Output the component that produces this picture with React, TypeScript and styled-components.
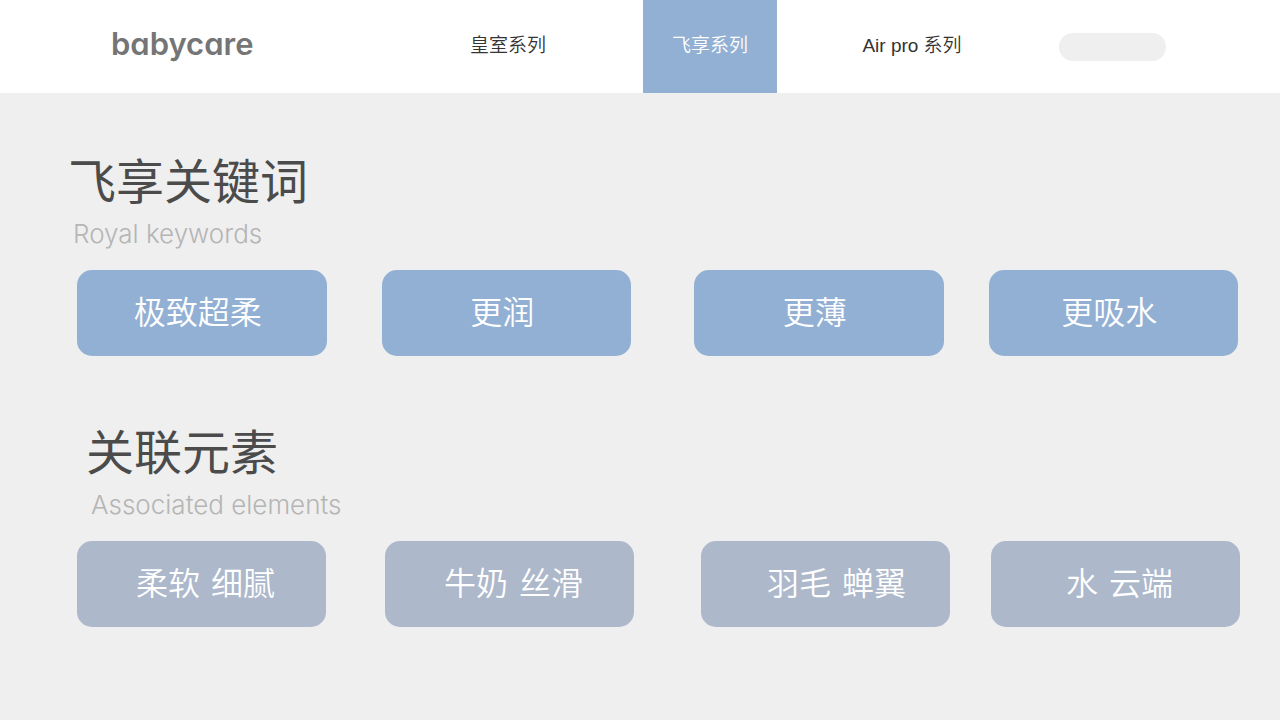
import React from 'react';
import styled, { createGlobalStyle } from 'styled-components';

const GlobalStyle = createGlobalStyle`
  * { box-sizing: border-box; }
  body {
    margin: 0;
    background: #efefef;
    font-family: 'Liberation Sans', 'Noto Sans CJK SC', sans-serif;
  }
`;

const Header = styled.header`
  display: flex;
  align-items: stretch;
  height: 93px;
  padding: 0 114px 0 111px;
  background: #fff;
`;

const Logo = styled.a`
  align-self: center;
  padding-bottom: 6px;
  color: #757575;
  font: 600 31px/36px Inter, sans-serif;
  font-feature-settings: 'cv11';
  text-decoration: none;
`;

const Nav = styled.nav`
  display: flex;
  gap: 68px;
  margin-left: auto;
`;

const NavLink = styled.a<{ $active?: boolean }>`
  display: flex;
  align-items: center;
  justify-content: center;
  width: 134px;
  padding-bottom: 2px;
  background: ${(p) => (p.$active ? '#92b0d3' : 'transparent')};
  color: ${(p) => (p.$active ? '#fff' : '#333')};
  font-size: 19px;
  font-weight: 350;
  line-height: 28px;
  text-decoration: none;
  white-space: nowrap;
`;

const Pill = styled.button`
  align-self: center;
  width: 107px;
  height: 28px;
  margin-left: 80px;
  padding: 0;
  border: 0;
  border-radius: 14px;
  background: #efefef;
`;

const Main = styled.main`
  display: flex;
  flex-direction: column;
  gap: 63px;
  padding: 55px 0 90px;
`;

const Section = styled.section`
  display: flex;
  flex-direction: column;
`;

const Titles = styled.div<{ $indent: number }>`
  padding-left: ${(p) => p.$indent}px;
`;

const Title = styled.h2`
  margin: 0;
  color: #4b4b4b;
  font-size: 48px;
  font-weight: 400;
  line-height: 70px;
`;

const Subtitle = styled.p`
  margin: 0 0 20px 5px;
  color: #b5b5b5;
  font: 300 26px/32px Inter, sans-serif;
`;

const Row = styled.div<{ $end: number }>`
  display: flex;
  padding: 0 ${(p) => p.$end}px 0 77px;
`;

const Card = styled.button<{ $tone: string; $before: number; $inset: string }>`
  flex: 1 1 240px;
  min-width: 0;
  height: 86px;
  margin: 0 0 0 ${(p) => p.$before}px;
  padding: ${(p) => p.$inset};
  border: 0;
  border-radius: 15px;
  background: ${(p) => p.$tone};
  color: #fff;
  font-family: 'Noto Sans CJK SC', sans-serif;
  font-size: 32px;
  font-weight: 350;
  line-height: 48px;
  white-space: nowrap;
`;

const Words = styled.span`
  display: inline-flex;
  gap: 11px;
`;

interface CardData {
  words: string[];
  before: number;
  wide?: boolean;
}

interface SectionData {
  title: string;
  subtitle: string;
  indent: number;
  end: number;
  tone: string;
  inset: string;
  cards: CardData[];
}

const sections: SectionData[] = [
  {
    title: '飞享关键词',
    subtitle: 'Royal keywords',
    indent: 68,
    end: 42,
    tone: '#92b0d3',
    inset: '0 8px 6px 0',
    cards: [
      { words: ['极致超柔'], before: 0 },
      { words: ['更润'], before: 55 },
      { words: ['更薄'], before: 63 },
      { words: ['更吸水'], before: 45 },
    ],
  },
  {
    title: '关联元素',
    subtitle: 'Associated elements',
    indent: 86,
    end: 40,
    tone: '#adb8cb',
    inset: '0 0 6px 8px',
    cards: [
      { words: ['柔软', '细腻'], before: 0 },
      { words: ['牛奶', '丝滑'], before: 59 },
      { words: ['羽毛', '蝉翼'], before: 67, wide: true },
      { words: ['水', '云端'], before: 41 },
    ],
  },
];

export default function App() {
  return (
    <>
      <GlobalStyle />
      <Header>
        <Logo href="#">babycare</Logo>
        <Nav>
          <NavLink href="#royal">皇室系列</NavLink>
          <NavLink href="#flying" $active aria-current="page">飞享系列</NavLink>
          <NavLink href="#airpro">Air pro 系列</NavLink>
        </Nav>
        <Pill type="button" />
      </Header>
      <Main>
        {sections.map((s) => (
          <Section key={s.title}>
            <Titles $indent={s.indent}>
              <Title>{s.title}</Title>
              <Subtitle>{s.subtitle}</Subtitle>
            </Titles>
            <Row $end={s.end}>
              {s.cards.map((c) => (
                <Card
                  key={c.words[0]}
                  type="button"
                  $tone={s.tone}
                  $before={c.before}
                  $inset={c.wide ? '0 0 6px 22px' : s.inset}
                >
                  <Words>
                    {c.words.map((w) => (
                      <span key={w}>{w}</span>
                    ))}
                  </Words>
                </Card>
              ))}
            </Row>
          </Section>
        ))}
      </Main>
    </>
  );
}
